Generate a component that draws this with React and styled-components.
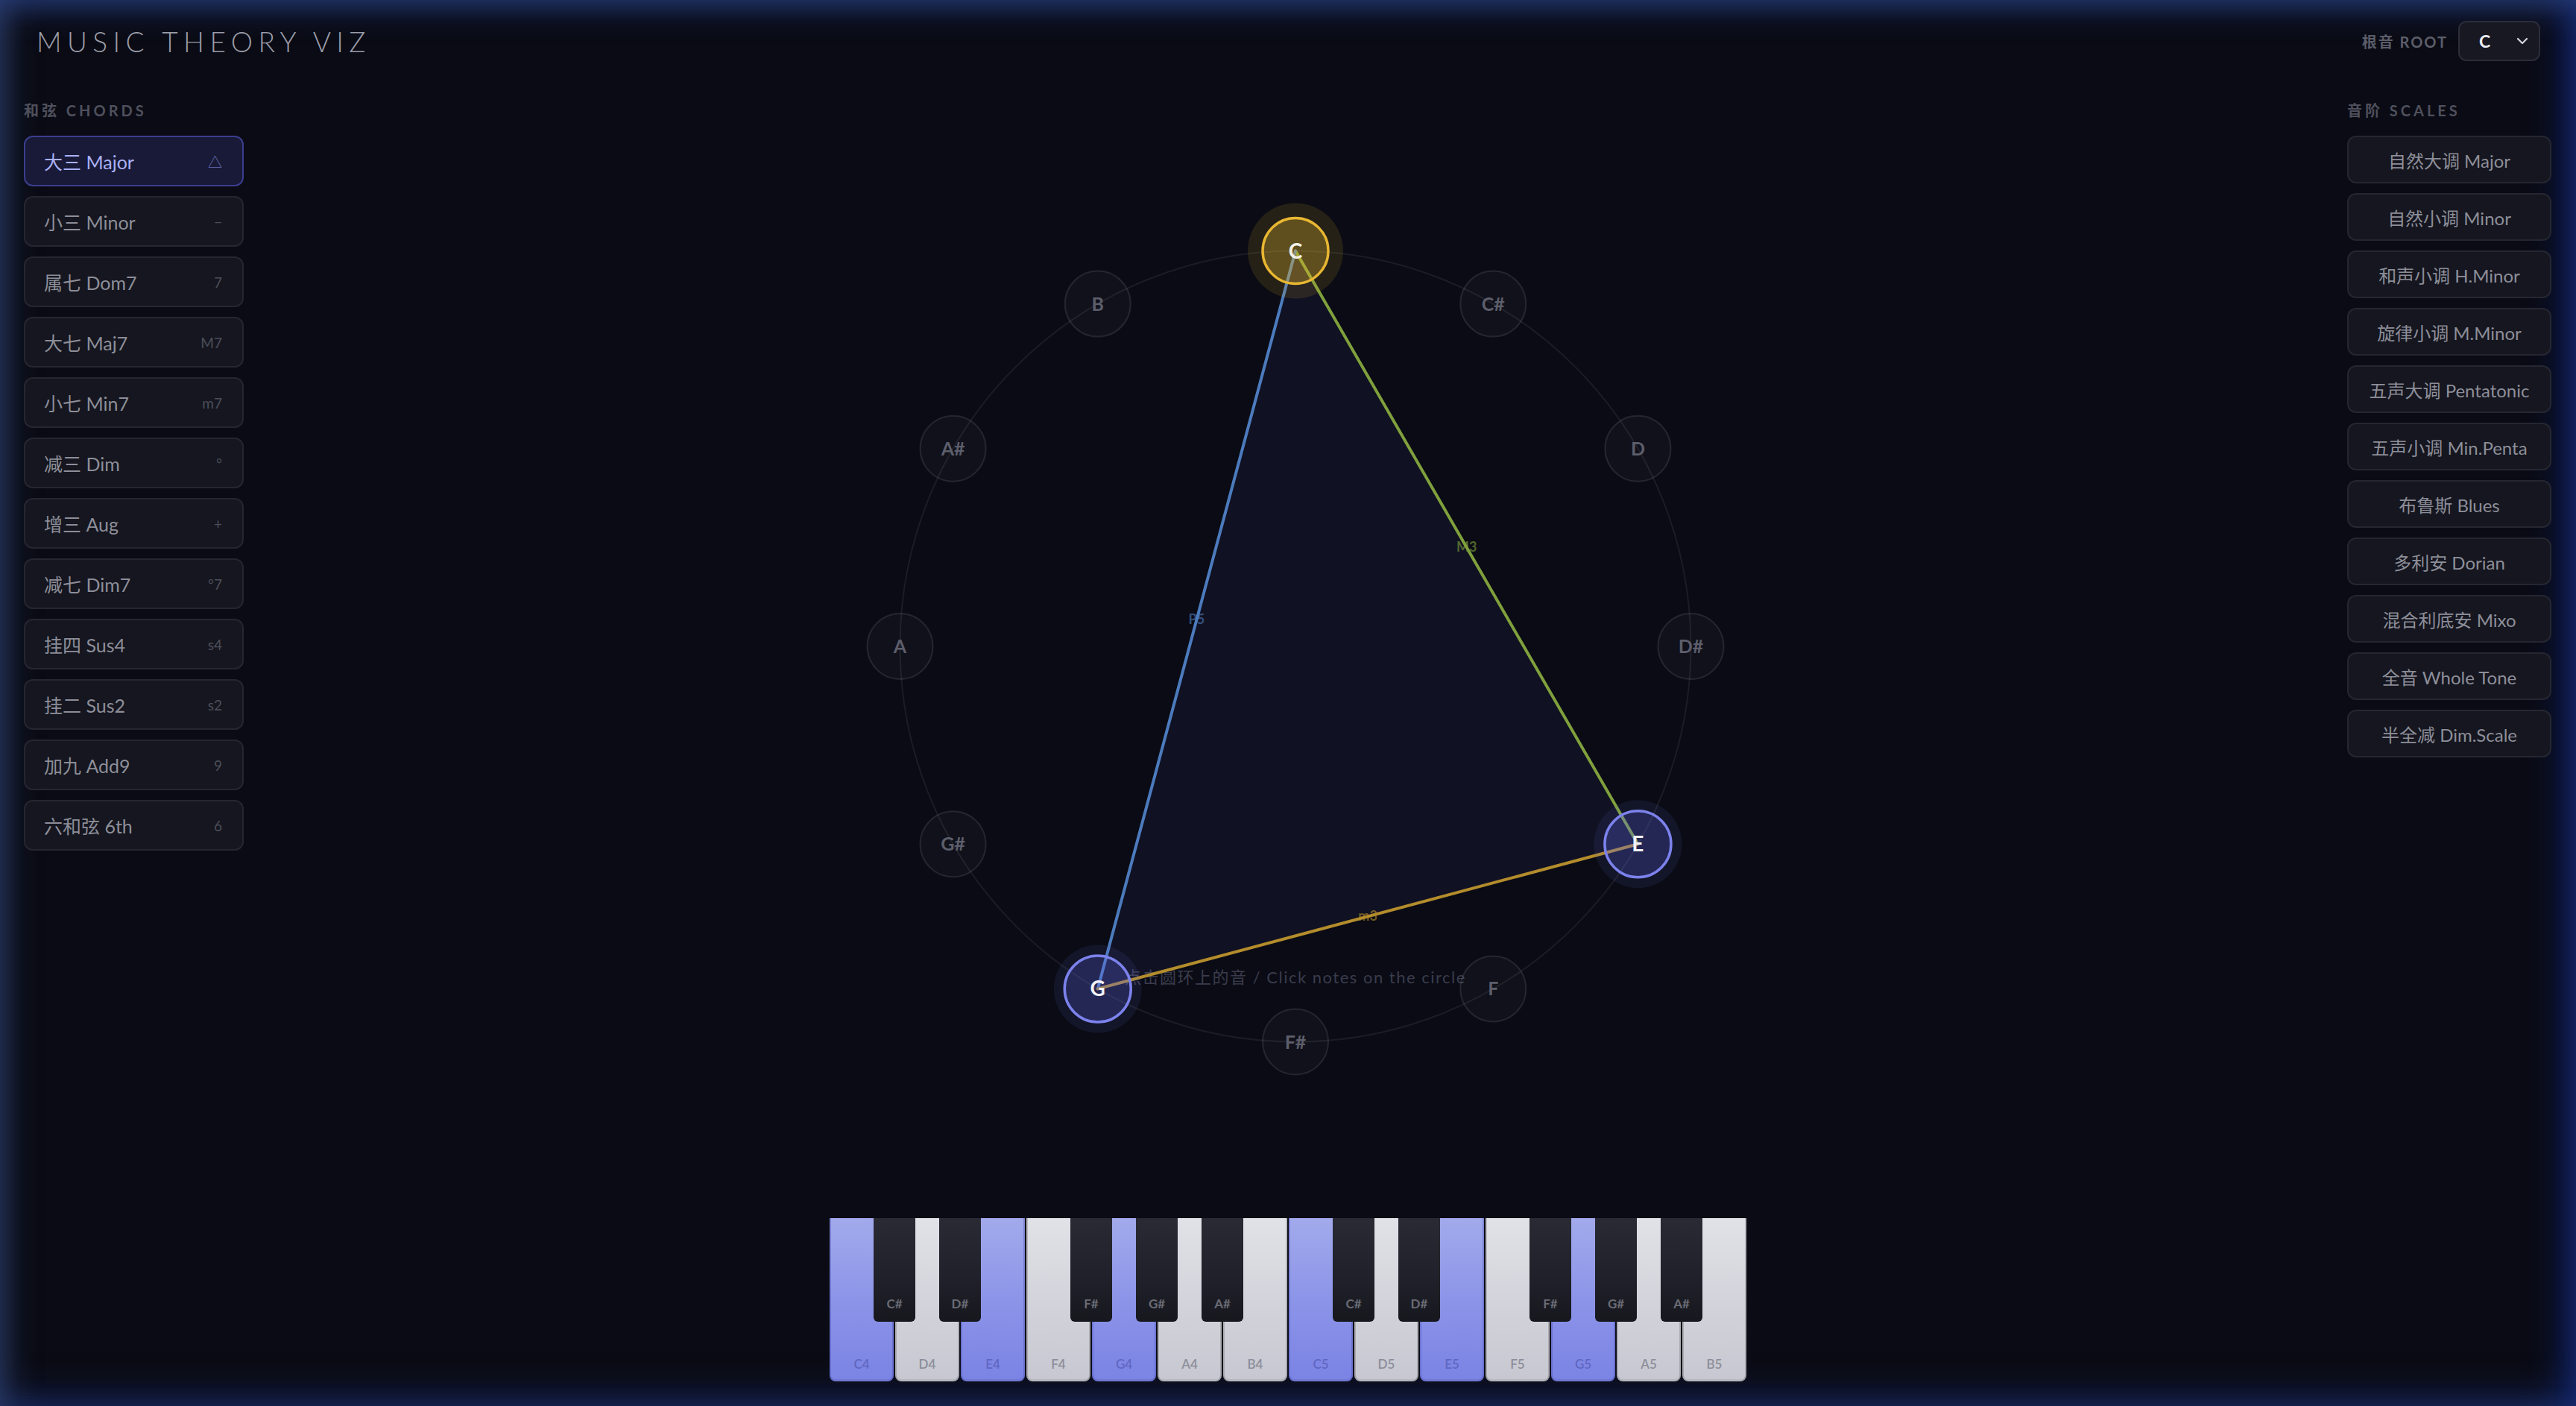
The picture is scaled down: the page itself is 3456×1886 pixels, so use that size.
import React from 'react';
import styled, { createGlobalStyle } from 'styled-components';

const GlobalStyle = createGlobalStyle`
  html, body { margin: 0; padding: 0; background: #0a0b14; }
  body { font-family: Lato, "Noto Sans CJK SC", sans-serif; }
  #root { width: 100vw; height: 100vh; }
`;

const Page = styled.div`
  width: 100vw;
  height: 100vh;
  overflow: hidden;
  box-sizing: border-box;
  display: flex;
  flex-direction: column;
  background: #0a0b14;
  box-shadow:
    inset 0 32px 44px -22px rgba(40, 62, 122, 0.85),
    inset 32px 0 44px -22px rgba(46, 62, 100, 0.8),
    inset -34px 0 52px -22px rgba(18, 40, 124, 0.9),
    inset 0 -32px 52px -22px rgba(28, 44, 96, 0.85);
`;

const Header = styled.header`
  display: flex;
  align-items: center;
  justify-content: space-between;
  height: 54px;
  padding: 28px 48px 0 49px;
`;

const Title = styled.h1`
  margin: 0;
  font-family: Lato, sans-serif;
  font-weight: 300;
  font-size: 37px;
  letter-spacing: 0.2em;
  color: #9a9ca8;
`;

const RootGroup = styled.div`
  display: flex;
  align-items: center;
  gap: 14px;
`;

const SmallLabel = styled.span`
  font-size: 20px;
  font-weight: 700;
  letter-spacing: 0.1em;
  color: #5c5d69;
`;

const Select = styled.div`
  box-sizing: border-box;
  width: 110px;
  height: 54px;
  display: flex;
  align-items: center;
  justify-content: space-between;
  padding: 0 10px 0 26px;
  border-radius: 11px;
  background: #171822;
  border: 2px solid #2c2d3a;
  color: #ececf2;
  font-size: 23px;
  font-weight: 700;
`;

const Main = styled.main`
  flex: 1;
  display: flex;
  min-height: 0;
  padding: 0 33px 0 32px;
`;

const Aside = styled.aside`
  width: ${p => p.$width}px;
  flex-shrink: 0;
  padding-top: 54px;
  display: flex;
  flex-direction: column;
`;

const SectionLabel = styled.div`
  height: 24px;
  line-height: 24px;
  font-size: 20px;
  font-weight: 700;
  letter-spacing: 0.2em;
  color: #4f505d;
  margin-bottom: 22px;
`;

const List = styled.div`
  display: flex;
  flex-direction: column;
  gap: 13px;
`;

const ChordButton = styled.div`
  box-sizing: border-box;
  height: 68px;
  display: flex;
  align-items: center;
  justify-content: space-between;
  padding: 0 27px 0 25px;
  border-radius: 12px;
  border: 2px solid ${p => (p.$active ? '#3a3e8e' : '#252631')};
  background: ${p => (p.$active ? '#191a38' : '#15161f')};
  color: ${p => (p.$active ? '#a9b1f6' : '#8d8e99')};
  font-size: 25px;
`;

const Symbol = styled.span`
  font-size: 19px;
  color: ${p => (p.$active ? '#6c71b8' : '#4d4e59')};
`;

const ScaleButton = styled.div`
  box-sizing: border-box;
  height: 64px;
  display: flex;
  align-items: center;
  justify-content: center;
  border-radius: 12px;
  border: 2px solid #252631;
  background: #15161f;
  color: #8d8e99;
  font-size: 24px;
`;

const Stage = styled.section`
  flex: 1;
  display: flex;
  justify-content: center;
  align-items: flex-start;
`;

const Wheel = styled.svg`
  margin-top: 184.5px;
  width: 1200px;
  height: 1200px;
  overflow: visible;
  font-family: Lato, "Noto Sans CJK SC", sans-serif;
`;

const Footer = styled.footer`
  display: flex;
  justify-content: center;
  padding-bottom: 33px;
`;

const Piano = styled.div`
  position: relative;
  display: flex;
  gap: 2px;
`;

const WhiteKey = styled.div`
  box-sizing: border-box;
  width: 86px;
  height: 219px;
  display: flex;
  align-items: flex-end;
  justify-content: center;
  padding-bottom: 13px;
  border-radius: 0 0 8px 8px;
  background: ${p =>
    p.$on
      ? 'linear-gradient(180deg, #a2aaec 0%, #8a92e8 55%, #7b83e4 100%)'
      : 'linear-gradient(180deg, #e1e2e7 0%, #d2d3da 55%, #c6c7d0 100%)'};
  box-shadow:
    inset 2px 0 0 ${p => (p.$on ? 'rgba(60,70,170,0.35)' : 'rgba(0,0,0,0.16)')},
    inset -2px 0 0 ${p => (p.$on ? 'rgba(60,70,170,0.35)' : 'rgba(0,0,0,0.16)')},
    inset 0 -3px 0 rgba(0,0,0,0.08);
  color: ${p => (p.$on ? '#5f67c2' : '#8d8e9a')};
  font-size: 17px;
  font-weight: 600;
`;

const BlackKey = styled.div`
  position: absolute;
  top: 0;
  left: ${p => p.$left}px;
  box-sizing: border-box;
  width: 56px;
  height: 139px;
  display: flex;
  align-items: flex-end;
  justify-content: center;
  padding-bottom: 14px;
  border-radius: 0 0 6px 6px;
  background: linear-gradient(180deg, #292a34 0%, #1f2029 60%, #17181e 100%);
  color: #6a6b75;
  font-size: 17px;
  font-weight: 700;
`;

const CHORDS = [
  ['大三 Major', '△'],
  ['小三 Minor', '−'],
  ['属七 Dom7', '7'],
  ['大七 Maj7', 'M7'],
  ['小七 Min7', 'm7'],
  ['减三 Dim', '°'],
  ['增三 Aug', '+'],
  ['减七 Dim7', '°7'],
  ['挂四 Sus4', 's4'],
  ['挂二 Sus2', 's2'],
  ['加九 Add9', '9'],
  ['六和弦 6th', '6'],
];

const SCALES = [
  '自然大调 Major',
  '自然小调 Minor',
  '和声小调 H.Minor',
  '旋律小调 M.Minor',
  '五声大调 Pentatonic',
  '五声小调 Min.Penta',
  '布鲁斯 Blues',
  '多利安 Dorian',
  '混合利底安 Mixo',
  '全音 Whole Tone',
  '半全减 Dim.Scale',
];

const NOTES = ['C', 'C#', 'D', 'D#', 'E', 'F', 'F#', 'G', 'G#', 'A', 'A#', 'B'];
const CX = 600;
const CY = 600;
const R = 530.5;
const pos = i => {
  const a = (i * 30 * Math.PI) / 180;
  return [CX + R * Math.sin(a), CY - R * Math.cos(a)];
};

const ROOT = 0;
const ACTIVE = [4, 7];

const EDGES = [
  { a: 0, b: 4, color: '#7fa03c', label: 'M3' },
  { a: 0, b: 7, color: '#4c7bbd', label: 'P5' },
  { a: 7, b: 4, color: '#b38c2c', label: 'm3' },
];

function CircleDiagram() {
  const tri = [0, 4, 7].map(pos);
  return (
    <Wheel viewBox="0 0 1200 1200">
      <circle cx={CX} cy={CY} r={R} fill="none" stroke="rgba(255,255,255,0.07)" strokeWidth="2" />
      <text
        x={CX}
        y={CY + 452}
        textAnchor="middle"
        fontSize="22"
        letterSpacing="1.5"
        fill="#3a3c4d"
      >
        点击圆环上的音 / Click notes on the circle
      </text>
      <polygon
        points={tri.map(p => p.join(',')).join(' ')}
        fill="rgba(92,98,210,0.075)"
        stroke="none"
      />
      {EDGES.map(e => {
        const [x1, y1] = pos(e.a);
        const [x2, y2] = pos(e.b);
        return (
          <g key={e.label}>
            <line x1={x1} y1={y1} x2={x2} y2={y2} stroke={e.color} strokeWidth="4" strokeLinecap="round" />
            <text
              x={(x1 + x2) / 2}
              y={(y1 + y2) / 2 + 6}
              textAnchor="middle"
              fontSize="18"
              fontWeight="700"
              fill={e.color}
              opacity="0.6"
            >
              {e.label}
            </text>
          </g>
        );
      })}
      {NOTES.map((n, i) => {
        const [x, y] = pos(i);
        const isRoot = i === ROOT;
        const isActive = ACTIVE.includes(i);
        if (isRoot) {
          return (
            <g key={n}>
              <circle cx={x} cy={y} r="64" fill="rgba(232,184,48,0.13)" />
              <circle cx={x} cy={y} r="44" fill="rgba(232,184,48,0.3)" stroke="#e8b732" strokeWidth="3.5" />
              <text x={x} y={y + 10} textAnchor="middle" fontSize="28" fontWeight="700" fill="#f4f1e8">
                {n}
              </text>
            </g>
          );
        }
        if (isActive) {
          return (
            <g key={n}>
              <circle cx={x} cy={y} r="59" fill="rgba(110,116,240,0.1)" />
              <circle cx={x} cy={y} r="44.5" fill="rgba(100,106,235,0.22)" stroke="#7c82ec" strokeWidth="3.5" />
              <text x={x} y={y + 10} textAnchor="middle" fontSize="28" fontWeight="700" fill="#f2f2f8">
                {n}
              </text>
            </g>
          );
        }
        return (
          <g key={n}>
            <circle cx={x} cy={y} r="44" fill="rgba(255,255,255,0.028)" stroke="rgba(255,255,255,0.1)" strokeWidth="2" />
            <text x={x} y={y + 9} textAnchor="middle" fontSize="25" fontWeight="700" fill="#5d5e6b">
              {n}
            </text>
          </g>
        );
      })}
    </Wheel>
  );
}

const WHITE = ['C', 'D', 'E', 'F', 'G', 'A', 'B'];
const BLACK_AFTER = [
  [0, 'C#'],
  [1, 'D#'],
  [3, 'F#'],
  [4, 'G#'],
  [5, 'A#'],
];
const ON = ['C', 'E', 'G'];

function Keyboard() {
  const whites = [];
  const blacks = [];
  [4, 5].forEach((oct, o) => {
    WHITE.forEach(w => whites.push({ name: w, label: `${w}${oct}` }));
    BLACK_AFTER.forEach(([idx, name]) => {
      const wi = o * 7 + idx;
      blacks.push({ name, left: (wi + 1) * 88 - 1 - 28, key: `${name}${oct}` });
    });
  });
  return (
    <Piano>
      {whites.map(k => (
        <WhiteKey key={k.label} $on={ON.includes(k.name)}>
          {k.label}
        </WhiteKey>
      ))}
      {blacks.map(b => (
        <BlackKey key={b.key} $left={b.left}>
          {b.name}
        </BlackKey>
      ))}
    </Piano>
  );
}

function Chevron() {
  return (
    <svg width="24" height="24" viewBox="0 0 24 24" fill="none" stroke="#d4d4dc" strokeWidth="2.2" strokeLinecap="round" strokeLinejoin="round">
      <path d="M6 9l6 6 6-6" />
    </svg>
  );
}

export default function App() {
  return (
    <>
      <GlobalStyle />
      <Page>
        <Header>
          <Title>MUSIC THEORY VIZ</Title>
          <RootGroup>
            <SmallLabel>根音 ROOT</SmallLabel>
            <Select>
              <span>C</span>
              <Chevron />
            </Select>
          </RootGroup>
        </Header>
        <Main>
          <Aside $width={295}>
            <SectionLabel>和弦 CHORDS</SectionLabel>
            <List>
              {CHORDS.map(([name, sym], i) => (
                <ChordButton key={name} $active={i === 0}>
                  <span>{name}</span>
                  <Symbol $active={i === 0}>{sym}</Symbol>
                </ChordButton>
              ))}
            </List>
          </Aside>
          <Stage>
            <CircleDiagram />
          </Stage>
          <Aside $width={274}>
            <SectionLabel>音阶 SCALES</SectionLabel>
            <List>
              {SCALES.map(s => (
                <ScaleButton key={s}>{s}</ScaleButton>
              ))}
            </List>
          </Aside>
        </Main>
        <Footer>
          <Keyboard />
        </Footer>
      </Page>
    </>
  );
}
